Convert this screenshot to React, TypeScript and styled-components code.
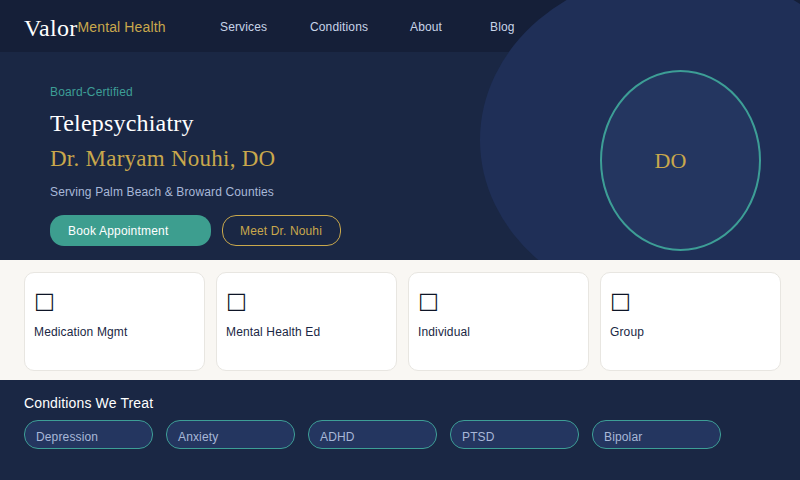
import React from 'react';
import styled, { createGlobalStyle } from 'styled-components';

const GlobalStyle = createGlobalStyle`
  html, body {
    margin: 0;
    padding: 0;
    width: 800px;
    height: 480px;
    overflow: hidden;
    background: #1a2744;
    font-family: "Liberation Sans", Arial, sans-serif;
    letter-spacing: 0.14px;
  }
`;

const Page = styled.div`
  width: 800px;
  height: 480px;
  display: flex;
  flex-direction: column;
`;

const Top = styled.div`
  position: relative;
  height: 260px;
  overflow: hidden;
  background: #1a2744;
  flex-shrink: 0;
`;

// big decorative shape behind the nav and the portrait
const BigCircle = styled.div`
  position: absolute;
  left: 480px;
  top: -30px;
  width: 400px;
  height: 340px;
  border-radius: 50%;
  background: #1f2f57;
  z-index: 1;
`;

const Header = styled.header`
  height: 52px;
  background: #151f38;
  display: flex;
  align-items: center;
  padding-left: 24px;
`;

const Logo = styled.div`
  width: 196px;
  display: flex;
  align-items: center;
  flex-shrink: 0;
`;

const LogoName = styled.span`
  margin-top: 4px;
  font-family: "Liberation Serif", Georgia, serif;
  font-size: 24px;
  letter-spacing: 0.3px;
  color: #ffffff;
`;

const LogoSub = styled.span`
  margin-top: 2px;
  font-size: 14px;
  color: #c9a84c;
`;

const Nav = styled.nav`
  position: relative;
  z-index: 2;
  display: flex;
  padding-top: 2px;
`;

const NavLink = styled.a<{ $width: number }>`
  width: ${({ $width }) => $width}px;
  font-size: 12px;
  color: #c8d4e8;
  text-decoration: none;
`;

const Hero = styled.section`
  position: relative;
  z-index: 2;
  padding: 33px 0 0 50px;
  display: flex;
  flex-direction: column;
  align-items: flex-start;
`;

const Badge = styled.div`
  font-size: 12px;
  line-height: 14px;
  color: #3d9e96;
`;

const Title = styled.h1`
  margin: 10px 0 0;
  font-family: "Liberation Serif", Georgia, serif;
  font-weight: 400;
  font-size: 24px;
  letter-spacing: 0.2px;
  line-height: 28px;
  color: #ffffff;
`;

const Doctor = styled.h2`
  margin: 9px 0 0;
  font-family: "Liberation Serif", Georgia, serif;
  font-weight: 400;
  font-size: 23px;
  letter-spacing: 0.25px;
  line-height: 26px;
  color: #c9a84c;
`;

const Serving = styled.p`
  margin: 13px 0 0;
  font-size: 12px;
  line-height: 14px;
  color: #a8b8d8;
`;

const Actions = styled.div`
  margin-top: 16px;
  display: flex;
  gap: 11px;
`;

const PrimaryButton = styled.a`
  box-sizing: border-box;
  width: 161px;
  height: 31px;
  padding-left: 18px;
  display: flex;
  align-items: center;
  border-radius: 14px;
  background: #3d9e8f;
  color: #ffffff;
  font-size: 12px;
  letter-spacing: 0.19px;
`;

const GhostButton = styled.a`
  box-sizing: border-box;
  width: 119px;
  height: 31px;
  padding-left: 17px;
  display: flex;
  align-items: center;
  border-radius: 14px;
  border: 1px solid #c9a84c;
  color: #c9a84c;
  font-size: 12px;
`;

const Portrait = styled.div`
  position: absolute;
  z-index: 2;
  left: 600px;
  top: 70px;
  box-sizing: border-box;
  width: 161px;
  height: 181px;
  padding-right: 20px;
  border-radius: 50%;
  border: 2px solid #3d9e96;
  background: #243660;
  display: flex;
  align-items: center;
  justify-content: center;
  font-family: "Liberation Serif", Georgia, serif;
  font-size: 22px;
  letter-spacing: 0;
  color: #c9a84c;
`;

const Services = styled.section`
  height: 120px;
  box-sizing: border-box;
  padding: 12px 0 0 24px;
  background: #f9f7f3;
  display: grid;
  grid-template-columns: repeat(4, 181px);
  gap: 11px;
  align-items: start;
  flex-shrink: 0;
`;

const Card = styled.div`
  box-sizing: border-box;
  height: 99px;
  padding: 13px 9px 0;
  background: #ffffff;
  border: 1px solid #e8e6e1;
  border-radius: 10px;
`;

const CardIcon = styled.div`
  font-family: "DejaVu Sans", sans-serif;
  font-size: 22px;
  line-height: 30px;
  letter-spacing: 0;
  color: #0e1526;
`;

const CardLabel = styled.div`
  margin-top: 9px;
  font-size: 12px;
  line-height: 14px;
  color: #1a2744;
`;

const Conditions = styled.section`
  flex: 1;
  padding: 15px 0 0 24px;
  background: #1a2744;
`;

const ConditionsTitle = styled.h3`
  margin: 0;
  font-weight: 400;
  font-size: 14px;
  line-height: 16px;
  color: #ffffff;
`;

const Pills = styled.div`
  margin-top: 9px;
  display: flex;
  gap: 13px;
`;

const Pill = styled.span`
  box-sizing: border-box;
  width: 129px;
  height: 29px;
  padding: 9px 0 0 11px;
  border-radius: 14px;
  border: 1px solid #3d9e96;
  background: #243660;
  color: #a8b8d8;
  font-size: 12px;
  line-height: 14px;
`;

const navItems = [
  { label: 'Services', width: 90 },
  { label: 'Conditions', width: 100 },
  { label: 'About', width: 80 },
  { label: 'Blog', width: 40 },
];
const services = ['Medication Mgmt', 'Mental Health Ed', 'Individual', 'Group'];
const conditions = ['Depression', 'Anxiety', 'ADHD', 'PTSD', 'Bipolar'];

export default function App() {
  return (
    <Page>
      <GlobalStyle />
      <Top>
        <Header>
          <Logo>
            <LogoName>Valor</LogoName>
            <LogoSub>Mental Health</LogoSub>
          </Logo>
          <Nav>
            {navItems.map((item) => (
              <NavLink key={item.label} $width={item.width}>
                {item.label}
              </NavLink>
            ))}
          </Nav>
        </Header>
        <BigCircle />
        <Hero>
          <Badge>Board-Certified</Badge>
          <Title>Telepsychiatry</Title>
          <Doctor>Dr. Maryam Nouhi, DO</Doctor>
          <Serving>Serving Palm Beach &amp; Broward Counties</Serving>
          <Actions>
            <PrimaryButton>Book Appointment</PrimaryButton>
            <GhostButton>Meet Dr. Nouhi</GhostButton>
          </Actions>
        </Hero>
        <Portrait>DO</Portrait>
      </Top>
      <Services>
        {services.map((label) => (
          <Card key={label}>
            <CardIcon>□</CardIcon>
            <CardLabel>{label}</CardLabel>
          </Card>
        ))}
      </Services>
      <Conditions>
        <ConditionsTitle>Conditions We Treat</ConditionsTitle>
        <Pills>
          {conditions.map((name) => (
            <Pill key={name}>{name}</Pill>
          ))}
        </Pills>
      </Conditions>
    </Page>
  );
}
